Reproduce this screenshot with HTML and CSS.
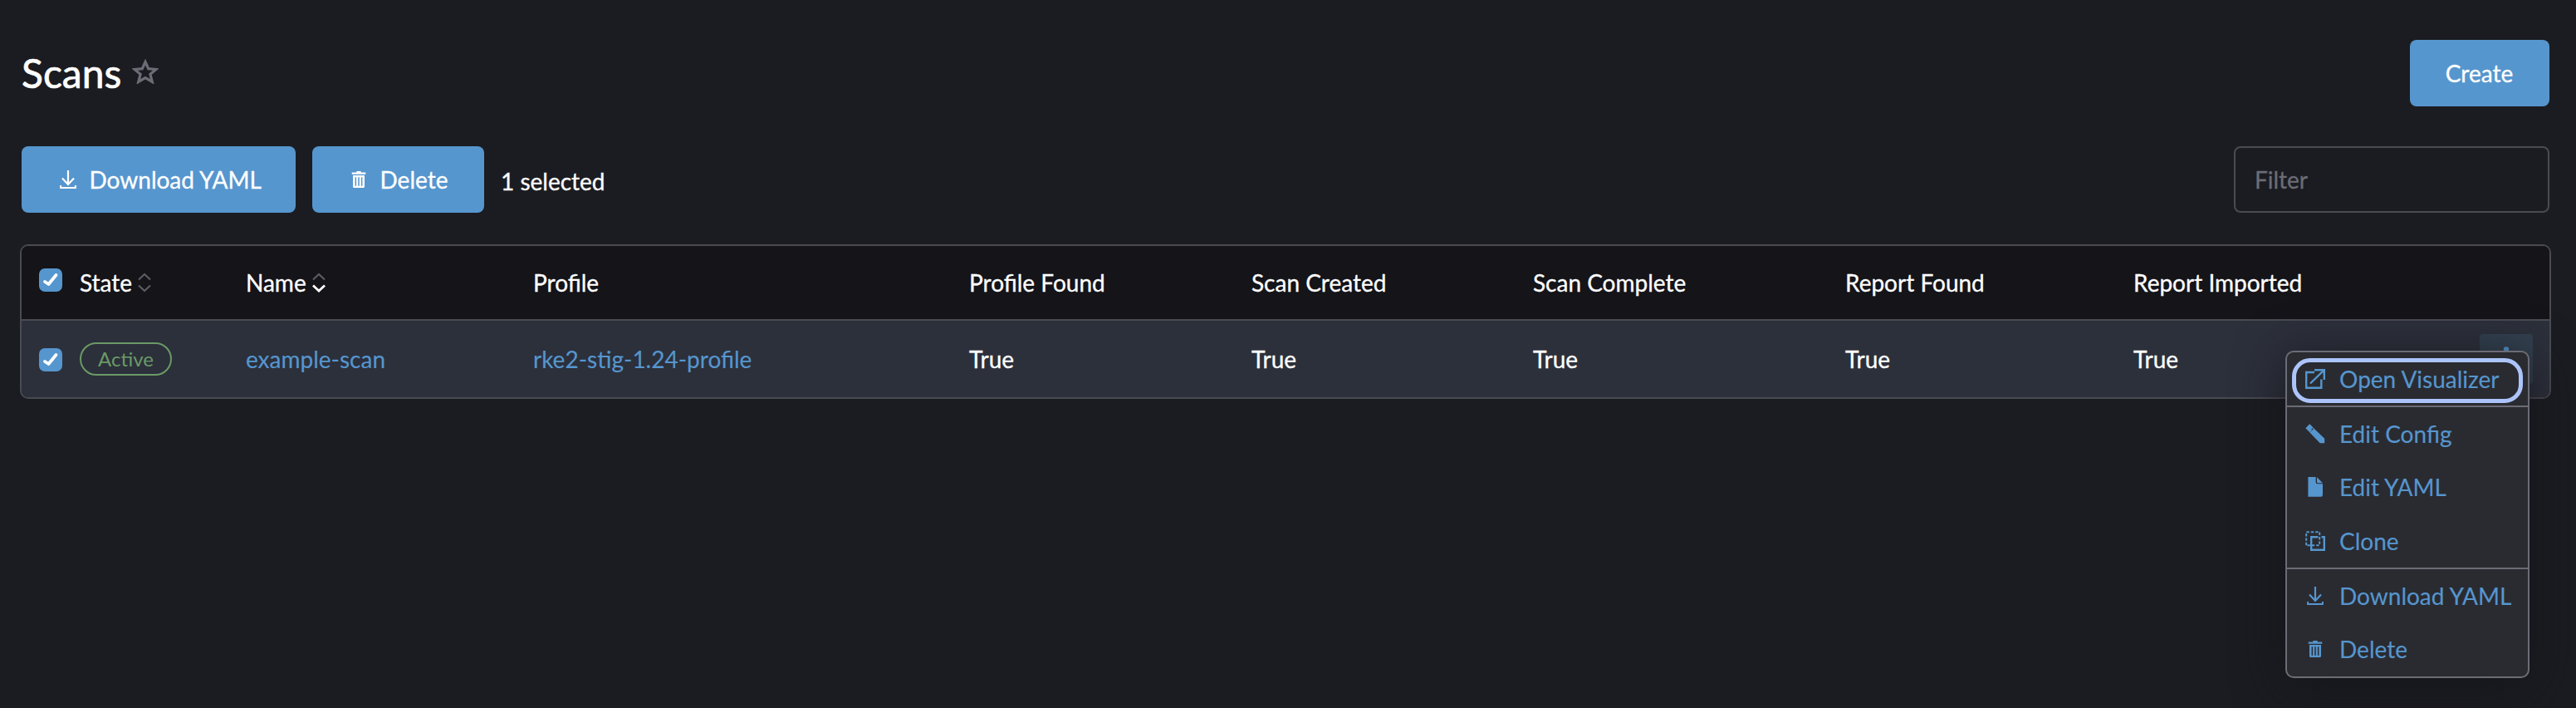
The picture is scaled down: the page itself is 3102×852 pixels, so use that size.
FILE: index.html
```html
<!DOCTYPE html>
<html lang="en">
<head>
<meta charset="utf-8">
<title>Scans</title>
<link rel="stylesheet" href="styles.css">
</head>
<body>
<svg class="defs" width="0" height="0" aria-hidden="true">
  <symbol id="i-download" viewBox="0 0 24 24"><path d="M12 1V18M5 10.5L12 18L19 10.5" fill="none" stroke="currentColor" stroke-width="2.2"/><path d="M3.1 19V22H20.9V19" fill="none" stroke="currentColor" stroke-width="2"/></symbol>
  <symbol id="i-trash" viewBox="0 0 24 24"><path fill="currentColor" fill-rule="evenodd" d="M9.3 2h5.4v1.4h5.6v2.4H3.7V3.4h5.6zM5 7h14v13.4q0 1.6-1.6 1.6H6.600Q5 22 5 20.400zM7.600 9.200v10.600h1.500V9.200zM11.250 9.200v10.600h1.500V9.200zM14.900 9.200v10.600h1.500V9.200z"/></symbol>
  <symbol id="i-check" viewBox="0 0 28 28"><path d="M7 16L11.500 19L20.500 8" fill="none" stroke="currentColor" stroke-width="3.800" stroke-linecap="round" stroke-linejoin="round"/></symbol>
</svg>
<main class="page">
  <header class="title-bar">
    <h1 class="title">Scans</h1>
    <svg class="star" viewBox="0 0 32 30"><path d="M16 3.500L19.700 11.700L29 12.500L21.900 18.300L24.300 27.500L16 22.600L7.700 27.500L10.100 18.300L3 12.500L12.300 11.700Z"/></svg>
    <button class="btn create">Create</button>
  </header>
  <section class="toolbar">
    <button class="btn download"><svg class="icon"><use href="#i-download"/></svg>Download YAML</button>
    <button class="btn delete"><svg class="icon"><use href="#i-trash"/></svg>Delete</button>
    <span class="selected">1 selected</span>
    <input class="filter" type="text" placeholder="Filter">
  </section>
  <section class="table">
    <div class="row head">
      <span class="check"><svg><use href="#i-check"/></svg></span>
      <span class="sortable">State<svg class="sort" viewBox="0 0 16 24"><path class="dim" d="M1 8.500L8 2L15 8.500"/><path class="dim" d="M1 15.500L8 22L15 15.500"/></svg></span>
      <span class="sortable">Name<svg class="sort" viewBox="0 0 16 24"><path class="dim" d="M1 8.500L8 2L15 8.500"/><path class="lit" d="M1 15.500L8 22L15 15.500"/></svg></span>
      <span>Profile</span>
      <span>Profile Found</span>
      <span>Scan Created</span>
      <span>Scan Complete</span>
      <span>Report Found</span>
      <span>Report Imported</span>
    </div>
    <div class="row body">
      <span class="check"><svg><use href="#i-check"/></svg></span>
      <span class="badge">Active</span>
      <a class="link">example-scan</a>
      <a class="link">rke2-stig-1.24-profile</a>
      <span>True</span>
      <span>True</span>
      <span>True</span>
      <span>True</span>
      <span>True</span>
      <span class="kebab"><svg viewBox="0 0 64 60"><circle cx="32" cy="18.500" r="3.200"/><circle cx="32" cy="30" r="3.200"/><circle cx="32" cy="41.500" r="3.200"/></svg></span>
    </div>
  </section>
</main>
<nav class="menu">
  <div class="group">
    <a class="item focused"><svg class="icon" viewBox="0 0 24 24"><path class="line" d="M11 4H1.200V22.800H19.300V12.500M6 17.500L21.500 2.500M11 1.200H22.800V13"/></svg>Open Visualizer</a>
  </div>
  <div class="group">
    <a class="item"><svg class="icon" viewBox="0 0 24 24"><path class="solid" d="M5.300 .3L9.500 4.500L4.500 9.500L.3 5.300zM10.400 5.400L23.200 17.800V23.300H17.700L5.400 10.400z"/><path class="solid" d="M4.500 9L5.400 10.400L8 7.600L7 6.500zM9 4.500L10.400 5.400L9.600 6.200L8.700 5.300z"/></svg>Edit Config</a>
    <a class="item"><svg class="icon" viewBox="0 0 24 24"><path class="solid" d="M3.400 0H12.600V6Q12.600 8.200 14.800 8.200H21V21.600Q21 23.800 18.800 23.800H3.400zM14 .2L21 7.200H15.200Q14 7.200 14 6z"/></svg>Edit YAML</a>
    <a class="item"><svg class="icon" viewBox="0 0 24 24"><path class="line dash" d="M1.200 17.200V1.200H17.200V17.200H1.200"/><path class="line" d="M15.500 7.200H7.200V22.800H22.800V7.200H19.500"/></svg>Clone</a>
  </div>
  <div class="group">
    <a class="item"><svg class="icon"><use href="#i-download"/></svg>Download YAML</a>
    <a class="item"><svg class="icon"><use href="#i-trash"/></svg>Delete</a>
  </div>
</nav>
</body>
</html>
```
FILE: styles.css
```css
* { box-sizing: border-box; }
body {
  margin: 0;
  height: 852px;
  position: relative;
  overflow: hidden;
  background: #1b1c21;
  color: #fff;
  font: 28px/34px Lato, sans-serif;
  -webkit-text-stroke: .3px currentColor;
}
.defs { display: none; }
.page { padding: 48px 30px 0 24px; }
.title-bar { display: flex; align-items: center; height: 80px; padding: 0 2px; }
.title {
  margin: 0;
  font-size: 48px;
  line-height: 58px;
  font-weight: 400;
  -webkit-text-stroke-width: .7px;
}
.star { width: 32px; height: 30px; margin: 0 0 4px 13px; }
.star path { fill: none; stroke: #6c6c76; stroke-width: 3.2; }
.btn {
  display: flex;
  align-items: center;
  height: 80px;
  padding: 0 0 0 42px;
  border: 0;
  border-radius: 8px;
  background: #5696ce;
  color: #fff;
  font: inherit;
  white-space: nowrap;
}
.create { margin-left: auto; padding: 0 1px 0 0; width: 168px; justify-content: center; }
.download { width: 330px; }
.delete { width: 207px; }
.icon { width: 24px; height: 24px; flex: none; overflow: visible; }
.btn .icon { margin: 0 13.5px 0 2px; }
.toolbar { display: flex; align-items: center; gap: 20px; margin-top: 48px; padding: 0 2px; }
.selected { padding-top: 4px; }
.filter {
  margin-left: auto;
  width: 380px;
  height: 80px;
  padding: 0 23px;
  border: 2px solid #4a4b52;
  border-radius: 8px;
  background: transparent;
  font: inherit;
}
.filter::placeholder { color: #6c6c76; opacity: 1; }
.table {
  width: 3048px;
  margin-top: 38px;
  border: 2px solid #4a4b52;
  border-radius: 10px;
  overflow: hidden;
}
.row {
  display: grid;
  grid-template-columns: 49px 200px 346px 525px 340px 339px 376px 347px 417px 64px;
  align-items: center;
  padding-left: 21px;
}
.head { height: 88px; background: #141419; }
.body { height: 94px; border-top: 2px solid #4a4b52; background: #2c303b; }
.check { width: 28px; height: 28px; border-radius: 7px; background: #5696ce; }
.check svg { display: block; width: 28px; height: 28px; }
.head .check { margin-bottom: 6px; }
.body .check { margin-top: 2px; }
.sortable { display: flex; align-items: center; gap: 7px; }
.sort { width: 16px; height: 24px; }
.sort path { fill: none; stroke-width: 2.2; }
.sort .dim { stroke: #5b5b62; }
.sort .lit { stroke: #fff; stroke-width: 2.8; }
.badge {
  width: 111px;
  height: 40px;
  border: 2px solid #6a9a66;
  border-radius: 20px;
  color: #6a9a66;
  font-size: 24px;
  line-height: 35px;
  text-align: center;
  -webkit-text-stroke-width: 0;
}
.link { color: #5696ce; -webkit-text-stroke-width: .15px; }
.kebab { width: 64px; height: 60px; border-radius: 4px; background: #32404f; }
.kebab svg { display: block; width: 64px; height: 60px; fill: #5696ce; }
.menu {
  position: absolute;
  left: 2752px;
  top: 422px;
  width: 294px;
  border: 2px solid #6c6c76;
  border-radius: 10px;
  background: #2a2b31;
  box-shadow: 0 10px 60px rgba(20, 20, 25, .8);
  -webkit-text-stroke-width: .15px;
}
.group + .group { border-top: 2px solid #6c6c76; }
.item {
  display: flex;
  align-items: center;
  gap: 17px;
  height: 64.33px;
  padding-left: 22px;
  color: #5696ce;
  white-space: nowrap;
}
.focused {
  position: relative;
  height: 64px;
}
.focused::after {
  content: "";
  position: absolute;
  inset: 7px 6px 3px;
  border: 5px solid #acc4fa;
  border-radius: 22px;
}
.line { fill: none; stroke: currentColor; stroke-width: 2.4; }
.dash { stroke-width: 2; stroke-dasharray: 3.4 2; }
.solid { fill: currentColor; }
```
